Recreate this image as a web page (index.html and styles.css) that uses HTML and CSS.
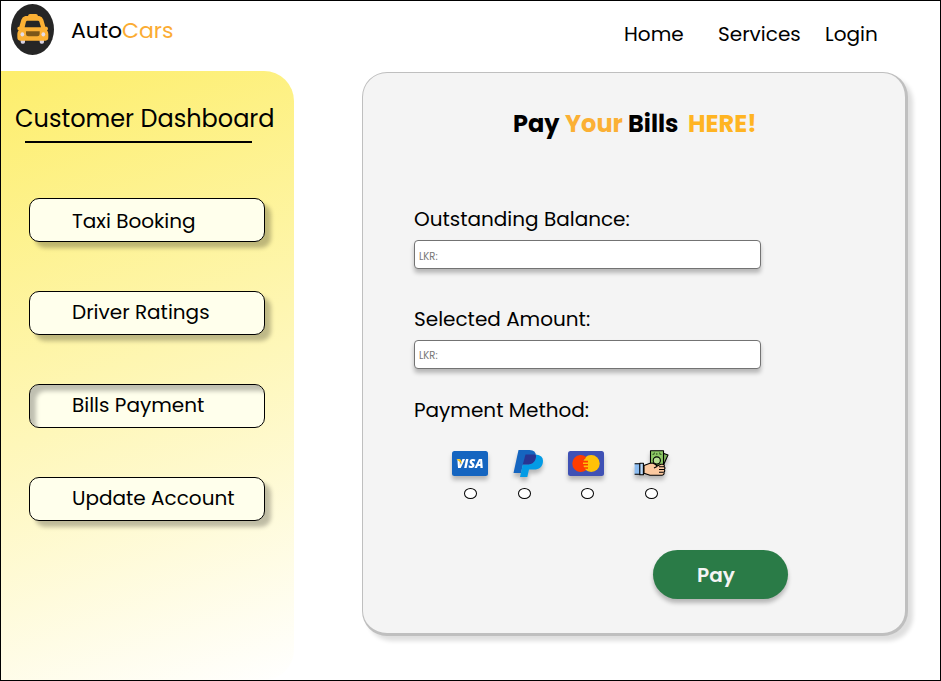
FILE: index.html
```html
<!DOCTYPE html>
<html lang="en">
<head>
<meta charset="utf-8">
<title>AutoCars</title>
<link rel="stylesheet" href="styles.css">
</head>
<body>
<div class="page">
  <header class="header">
    <svg class="logo" viewBox="33 12 129 153">
      <ellipse cx="97.500" cy="88.500" rx="64.500" ry="76.500" fill="#262626"/>
      <rect x="62" y="112" width="13" height="19" rx="5" fill="#d9d3e3"/>
      <rect x="119" y="112" width="13" height="19" rx="5" fill="#d9d3e3"/>
      <path d="M84 48q1-6 6-6h18q5 0 6 6h4q9 2 12 11l6 21h4q4 1 4 6 0 4-3 5 4 5 4 11v10q0 10-8 10H60q-8 0-8-10v-10q0-6 4-11-5-2-4-7 1-4 6-4l6-21q3-9 12-11z" fill="#fbb034"/>
      <path d="M82 62h32q3 0 4 3l5 17H74l4-17q1-3 4-3z" fill="#262626"/>
      <path d="M78 94h41v8q0 7-7 7H85q-7 0-7-7z" fill="#7d5719"/>
      <ellipse cx="67" cy="103" rx="5.500" ry="6.500" fill="#e4dcea"/>
      <ellipse cx="130" cy="103" rx="5.500" ry="6.500" fill="#e4dcea"/>
    </svg>
    <div class="brand">Auto<span class="brand-accent">Cars</span></div>
    <nav class="nav">
      <a class="nav-home">Home</a>
      <a class="nav-services">Services</a>
      <a class="nav-login">Login</a>
    </nav>
  </header>
  <div class="content">
    <aside class="sidebar">
      <h2 class="sidebar-title">Customer Dashboard</h2>
      <div class="menu">
        <a class="menu-item low">Taxi Booking</a>
        <a class="menu-item">Driver Ratings</a>
        <a class="menu-item active">Bills Payment</a>
        <a class="menu-item">Update Account</a>
      </div>
    </aside>
    <main class="card">
      <h1 class="title"><span class="t-pay">Pay</span><span class="t-your">Your</span><span class="t-bills">Bills</span><span class="t-here">HERE!</span></h1>
      <form class="form">
        <label class="label" for="balance">Outstanding Balance:</label>
        <input class="field field-balance" id="balance" placeholder="LKR:">
        <label class="label" for="amount">Selected Amount:</label>
        <input class="field" id="amount" placeholder="LKR:">
        <div class="label method">Payment Method:</div>
        <div class="methods">
          <div class="option visa">
            <svg class="icon" viewBox="0 0 36 27" width="36" height="27">
              <rect x="0" y="1" width="36" height="25" rx="2.500" fill="#1565c0"/>
              <text class="visa-text" x="4.500" y="18.300" textLength="27" lengthAdjust="spacingAndGlyphs">VISA</text>
              <path d="M4.300 9.300h3.500q1 0 1.200 1l.8 4.200Q8 11.400 4.300 9.300z" fill="#ffc107"/>
            </svg>
            <span class="radio"></span>
          </div>
          <div class="option paypal">
            <svg class="icon" viewBox="0 0 30 27" width="30" height="27">
              <path d="M5.500 0h11Q23 0 23 6c0 6-4 8.500-9 8.500H10L8 23H.5z" fill="#1565c0"/>
              <path d="M23 4.500q7 1 7 6.200c0 6.300-4 8.800-9 8.800h-5L14.300 27H7l2.800-12.500H14c5 0 9-3 9-10z" fill="#039be5"/>
              <path d="M12.500 4.500H22q1 .2 1 1.500c0 6-4 8.500-9 8.500H9.800z" fill="#283593"/>
            </svg>
            <span class="radio"></span>
          </div>
          <div class="option mastercard">
            <svg class="icon" viewBox="0 0 36 27" width="36" height="27">
              <rect y="1" width="36" height="25" rx="2.500" fill="#3f51b5"/>
              <circle cx="23.200" cy="13.500" r="8.500" fill="#ffc107"/>
              <path d="M18 6.800A8.500 8.500 0 1 0 18 20.200L16.800 18.800H20V17.200H15.600V15.600H20V14H15V12.400H20V10.800H15.500V9.200H17z" fill="#ff3d00"/>
            </svg>
            <span class="radio"></span>
          </div>
          <div class="option cash">
            <svg class="icon" viewBox="0 0 35 27" width="35" height="27" stroke="#000" stroke-width="1.100" stroke-linejoin="round">
              <path d="M28.500 3l5.500 2-4.500 10H26z" fill="#7fb55d"/>
              <path d="M16.500.7h13V16h-13z" fill="#8cc764"/>
              <path d="M18.500 4.500q2 0 2-2M27.500 4.500q-2 0-2-2" fill="none" stroke="#3f6b2c"/>
              <circle cx="22.800" cy="10.500" r="3.600" fill="#b5df92"/>
              <path d="M22.800 3.600v.8" fill="none"/>
              <path d="M10 15.500l6-2.200 3-.2q3.500 1 3.800 3.200l4-2h1.800q2.400.2 1.500 2.300 1.600 1.300.2 2.900 1.200 1.500-.3 2.700.6 2.700-2 3H16l-6-2z" fill="#fbc9a0"/>
              <path d="M23 16.500l-3 1.500M25 16.800h5M25 19.500h5M25 22.200h4.500" fill="none"/>
              <path d="M.6 13.800h5.700v10.400H.6" fill="#8cbcf0"/>
              <path d="M5.800 13.200h3.600v11.600H5.800z" fill="#b8d9fa"/>
            </svg>
            <span class="radio"></span>
          </div>
        </div>
        <button class="pay" type="button">Pay</button>
      </form>
    </main>
  </div>
</div>
</body>
</html>
```
FILE: styles.css
```css
* { box-sizing: border-box; }
body {
  margin: 0;
  font-family: Poppins, Inter, "Open Sans", sans-serif;
  font-size: 20px;
  line-height: 30px;
  color: #000;
  background: #fff;
}
.page {
  width: 941px;
  height: 681px;
  border: 1px solid #000;
  overflow: hidden;
}
.header {
  height: 70px;
  display: flex;
  align-items: flex-start;
}
.logo { width: 43px; height: 51px; margin: 3px 0 0 10px; }
.brand {
  width: 110px;
  margin: 15px 0 0 17px;
  font-size: 22px;
  white-space: nowrap;
}
.brand-accent { color: #fbac33; }
.nav { display: flex; margin: 18px 0 0 443px; }
.nav-home { width: 94px; }
.nav-services { width: 107px; }
.content { display: flex; align-items: flex-start; }
.sidebar {
  width: 293px;
  height: 609px;
  padding-top: 33px;
  border-radius: 0 30px 30px 0;
  background: linear-gradient(160deg, #fdee6b 0%, #fff 100%);
}
.sidebar-title {
  width: 227px;
  height: 39px;
  margin: 0 0 0 24px;
  border-bottom: 2px solid #000;
  font-size: 24px;
  font-weight: 400;
  white-space: nowrap;
  text-indent: -10px;
}
.menu {
  display: flex;
  flex-direction: column;
  gap: 49px;
  margin: 55px 0 0 28px;
}
.menu-item {
  width: 236px;
  height: 44px;
  padding: 5px 0 0 42px;
  border: 1px solid #000;
  border-radius: 10px;
  background: #ffffec;
  box-shadow: 6px 6px 4px rgba(0, 0, 0, .25);
}
.menu-item.low { padding-top: 7px; }
.menu-item.active { box-shadow: inset 6px 6px 4px rgba(0, 0, 0, .25); }
.card {
  width: 546px;
  height: 564px;
  margin: 1px 0 0 68px;
  padding-top: 36px;
  border: 1px solid #bfbfbf;
  border-width: 1px 3px 3px 1px;
  border-radius: 25px;
  background: #f4f4f4;
  box-shadow: 5px 5px 4px rgba(0, 0, 0, .13);
}
.title {
  display: flex;
  height: 30px;
  margin: 0 0 0 150px;
  font-size: 24px;
  font-weight: 700;
}
.t-pay { width: 52px; }
.t-your { width: 63px; color: #fbb034; }
.t-bills { width: 60px; }
.t-here { color: #ffb422; }
.form {
  display: flex;
  flex-direction: column;
  align-items: flex-start;
  margin: 65px 0 0 51px;
}
.label { height: 30px; }
.field {
  width: 347px;
  height: 29px;
  margin: 6px 0 35px;
  padding: 2px 4px 0;
  border: 1px solid #737373;
  border-radius: 4px;
  background: #fff;
  box-shadow: 0 4px 4px rgba(0, 0, 0, .25);
  font: 10px/20px Poppins, Inter, sans-serif;
}
.field-balance { padding-top: 4px; }
.field::placeholder { color: #777; opacity: 1; }
.method { margin-top: -9px; }
.methods { display: flex; margin: 25px 0 0 38px; }
.option { display: flex; flex-direction: column; align-items: center; }
.icon { display: block; filter: drop-shadow(0 4px 2px rgba(0, 0, 0, .25)); }
.visa-text {
  font: italic 800 12.500px "Open Sans", sans-serif;
  fill: #fff;
}
.radio {
  width: 13px;
  height: 11px;
  margin-top: 11px;
  border: 1px solid #000;
  border-radius: 50%;
  background: #fff;
}
.paypal { margin-left: 25px; }
.paypal .radio { margin-right: 7px; }
.mastercard { margin-left: 25px; }
.mastercard .radio { margin-left: 2px; }
.cash { margin-left: 30px; }
.pay {
  width: 135px;
  height: 49px;
  margin: 51px 0 0 239px;
  padding: 0 9px 0 0;
  border: 0;
  border-radius: 25px;
  background: #2a7b47;
  box-shadow: 0 4px 4px rgba(0, 0, 0, .25);
  color: #f4f4f4;
  font: 600 20px/30px Poppins, Inter, sans-serif;
}
```
